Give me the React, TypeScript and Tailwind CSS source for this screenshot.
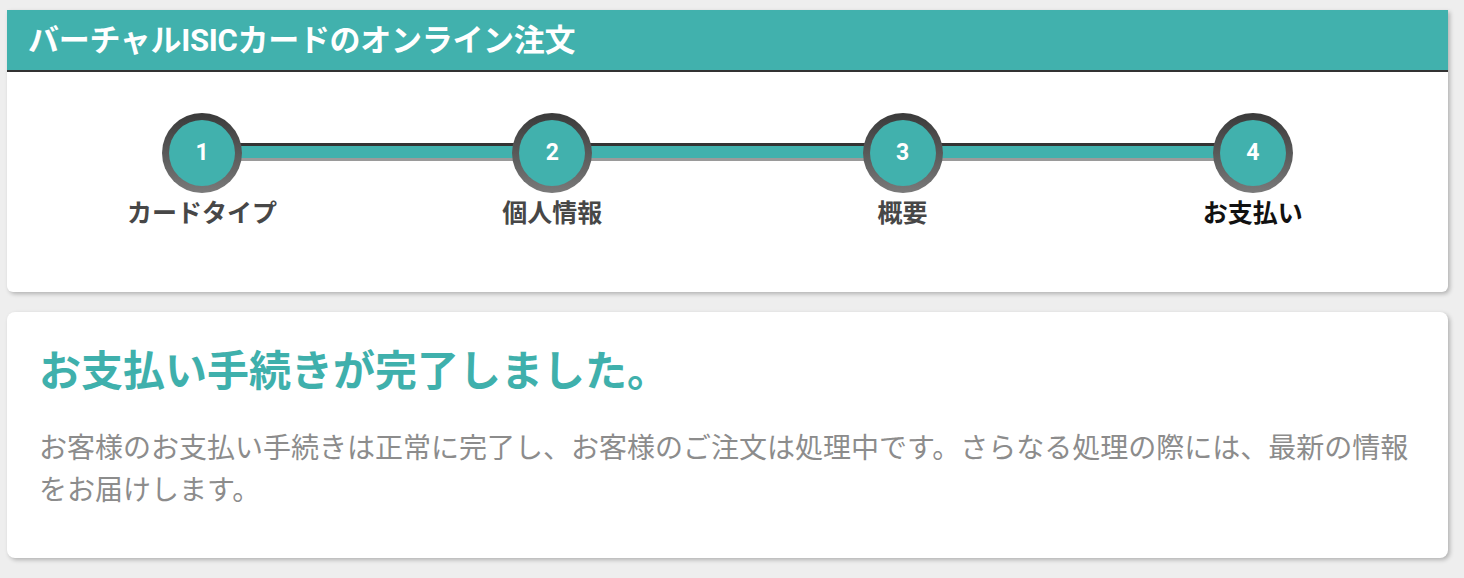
import React from 'react'

const steps = [
  { n: 1, label: 'カードタイプ' },
  { n: 2, label: '個人情報' },
  { n: 3, label: '概要' },
  { n: 4, label: 'お支払い', active: true },
]

const font = { fontFamily: 'Roboto, "Noto Sans CJK JP", sans-serif' }

export default function App() {
  return (
    <div className="min-h-screen bg-[#eeeeee] pt-[10px] pl-[7px] pr-[16px] pb-[20px]" style={font}>
      {/* Stepper card */}
      <div className="bg-white rounded-b-[6px] shadow-[2px_2px_4px_rgba(0,0,0,0.25)]">
        <div className="h-[62px] bg-[#41b1ad] border-b-2 border-[#333333] flex items-center pl-[21px]">
          <h1 className="text-[31px] font-bold text-white leading-none tracking-[-0.3px]">
            バーチャルISICカードのオンライン注文
          </h1>
        </div>
        <div className="pt-[41px] pb-[63px] px-[20px]">
          <div className="relative grid grid-cols-4">
            {/* connector line */}
            <div className="absolute left-[175px] right-[175px] top-[30px] h-[18px] bg-[#41b1ad] border-t-[3px] border-t-[#333333] border-b-[3px] border-b-[#9a9a9a]" />
            {steps.map((s) => (
              <div key={s.n} className="relative flex flex-col items-center">
                <div className="w-[80px] h-[80px] rounded-full bg-gradient-to-b from-[#3a3a3a] to-[#7a7a7a] p-[7px]">
                  <div className="w-full h-full rounded-full bg-[#41b1ad] flex items-center justify-center text-white font-bold text-[23px]">
                    {s.n}
                  </div>
                </div>
                <p
                  className={`mt-[6px] text-[25px] font-bold leading-[30px] ${
                    s.active ? 'text-[#111111]' : 'text-[#474747]'
                  }`}
                >
                  {s.label}
                </p>
              </div>
            ))}
          </div>
        </div>
      </div>

      {/* Result card */}
      <div className="mt-[20px] bg-white rounded-[8px] shadow-[2px_2px_4px_rgba(0,0,0,0.25)] pt-[36px] pb-[46px] pl-[32px] pr-[33px]">
        <h2 className="text-[42px] leading-[48px] font-semibold text-[#3fb0ac]">
          お支払い手続きが完了しました。
        </h2>
        <p className="mt-[32px] text-[28px] leading-[42px] text-[#8c8c8c]">
          お客様のお支払い手続きは正常に完了し、お客様のご注文は処理中です。さらなる処理の際には、最新の情報をお届けします。
        </p>
      </div>
    </div>
  )
}
